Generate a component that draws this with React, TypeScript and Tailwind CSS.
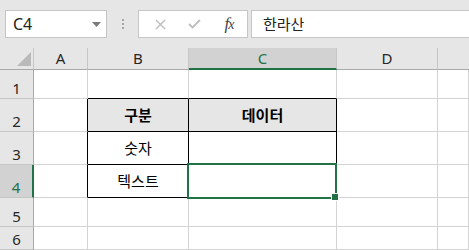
import React from "react";

function ColHeader({ label, selected, last }: { label: string; selected?: boolean; last?: boolean }) {
  return (
    <div
      className={
        "flex items-center justify-center border-b border-r text-[15px] " +
        (selected
          ? "bg-[#d2d2d2] text-[#217346] border-b-2 border-b-[#217346] border-r-[#c6c6c6]"
          : "bg-[#e6e6e6] text-[#262626] border-b-[#a8a8a8] border-r-[#c6c6c6]") +
        (last ? " border-r-0" : "")
      }
      style={{ fontFamily: '"Noto Sans", "Liberation Sans", sans-serif' }}
    >
      {label}
    </div>
  );
}

function RowHeader({ label, selected }: { label: string; selected?: boolean }) {
  return (
    <div
      className={
        "flex items-end justify-center pb-[1px] border-b text-[15px] leading-[18px] " +
        (selected
          ? "bg-[#d2d2d2] text-[#217346] border-r-2 border-r-[#217346] border-b-[#c6c6c6]"
          : "bg-[#e6e6e6] text-[#262626] border-r border-r-[#a8a8a8] border-b-[#c6c6c6]")
      }
      style={{ fontFamily: '"Noto Sans", "Liberation Sans", sans-serif' }}
    >
      {label}
    </div>
  );
}

function Cell({
  children,
  right = "g",
  bottom = "g",
  fill,
  bold,
}: {
  children?: React.ReactNode;
  right?: "g" | "k";
  bottom?: "g" | "k";
  fill?: boolean;
  bold?: boolean;
}) {
  return (
    <div
      className={
        "flex items-center justify-center border-r border-b text-[15px] text-black " +
        (right === "k" ? "border-r-black " : "border-r-[#d4d4d4] ") +
        (bottom === "k" ? "border-b-black " : "border-b-[#d4d4d4] ") +
        (fill ? "bg-[#e7e6e6] " : "bg-white ") +
        (bold ? "font-bold" : "font-normal")
      }
      style={{ fontFamily: '"Noto Sans CJK KR", "Noto Sans", sans-serif' }}
    >
      {children}
    </div>
  );
}

export default function App() {
  return (
    <div className="relative w-[469px] h-[250px] overflow-hidden bg-[#e6e6e6]">
      {/* formula bar */}
      <div className="flex h-[48px] items-start pt-[10px] pl-[5px]">
        <div
          className="flex h-[28px] w-[102px] items-center justify-between border border-[#c6c6c6] bg-white pl-[7px] pr-[5px] text-[16px] text-[#222]"
          style={{ fontFamily: '"Noto Sans", "Liberation Sans", sans-serif' }}
        >
          <span>C4</span>
          <svg width="9" height="5" viewBox="0 0 9 5">
            <path d="M0 0 L9 0 L4.5 5 Z" fill="#7a7a7a" />
          </svg>
        </div>
        <div className="flex h-[28px] w-[31px] flex-col items-center justify-center gap-[2px]">
          <div className="h-[2px] w-[2px] bg-[#a6a6a6]" />
          <div className="h-[2px] w-[2px] bg-[#a6a6a6]" />
          <div className="h-[2px] w-[2px] bg-[#a6a6a6]" />
        </div>
        <div className="flex h-[28px] w-[110px] items-center border border-[#c6c6c6] bg-white">
          <div className="flex w-[38px] justify-center pl-[4px]">
            <svg width="11" height="11" viewBox="0 0 11 11">
              <path d="M1 1 L10 10 M10 1 L1 10" stroke="#bdbdbd" strokeWidth="1.4" />
            </svg>
          </div>
          <div className="flex w-[34px] justify-center">
            <svg width="13" height="10" viewBox="0 0 13 10">
              <path d="M1 5 L4.5 8.5 L12 1" stroke="#bdbdbd" strokeWidth="1.8" fill="none" />
            </svg>
          </div>
          <div
            className="flex w-[34px] justify-center pl-[2px] text-[17px] italic text-[#444]"
            style={{ fontFamily: '"Liberation Serif", "DejaVu Serif", serif' }}
          >
            <span className="tracking-[-1px]">
              f<span className="text-[14px]">x</span>
            </span>
          </div>
        </div>
        <div
          className="ml-[3px] flex h-[28px] flex-1 items-center border border-r-0 border-[#c6c6c6] bg-white pl-[11px] text-[15px] text-[#222]"
          style={{ fontFamily: '"Noto Sans CJK KR", "Noto Sans", sans-serif' }}
        >
          한라산
        </div>
      </div>

      {/* grid */}
      <div className="grid h-[202px] grid-cols-[34px_54px_101px_148px_101px_1fr] grid-rows-[22px_29px_33px_33px_33px_29px_1fr]">
        {/* header row */}
        <div className="relative border-b border-r border-b-[#a8a8a8] border-r-[#c6c6c6] bg-[#e6e6e6]">
          <svg className="absolute left-[17px] top-[4px]" width="14" height="14" viewBox="0 0 14 14">
            <path d="M14 0 L14 14 L0 14 Z" fill="#b9b9b9" />
          </svg>
        </div>
        <ColHeader label="A" />
        <ColHeader label="B" />
        <ColHeader label="C" selected />
        <ColHeader label="D" />
        <ColHeader label="" last />

        {/* row 1 */}
        <RowHeader label="1" />
        <Cell />
        <Cell bottom="k" />
        <Cell bottom="k" />
        <Cell />
        <Cell />

        {/* row 2 */}
        <RowHeader label="2" />
        <Cell right="k" />
        <Cell right="k" bottom="k" fill bold>
          구분
        </Cell>
        <Cell right="k" bottom="k" fill bold>
          데이터
        </Cell>
        <Cell />
        <Cell />

        {/* row 3 */}
        <RowHeader label="3" />
        <Cell right="k" />
        <Cell right="k" bottom="k">
          숫자
        </Cell>
        <Cell right="k" bottom="k" />
        <Cell />
        <Cell />

        {/* row 4 */}
        <RowHeader label="4" selected />
        <Cell right="k" />
        <Cell right="k" bottom="k">
          텍스트
        </Cell>
        <Cell right="k" bottom="k" />
        <Cell />
        <Cell />

        {/* row 5 */}
        <RowHeader label="5" />
        <Cell />
        <Cell />
        <Cell />
        <Cell />
        <Cell />

        {/* row 6 */}
        <RowHeader label="6" />
        <Cell />
        <Cell />
        <Cell />
        <Cell />
        <Cell />
      </div>

      {/* selection box over C4 */}
      <div className="pointer-events-none absolute left-[187px] top-[163px] h-[36px] w-[150px] border-2 border-[#217346]" />
      <div className="pointer-events-none absolute left-[331px] top-[193px] h-[8px] w-[8px] border border-white bg-[#217346]" />
    </div>
  );
}
